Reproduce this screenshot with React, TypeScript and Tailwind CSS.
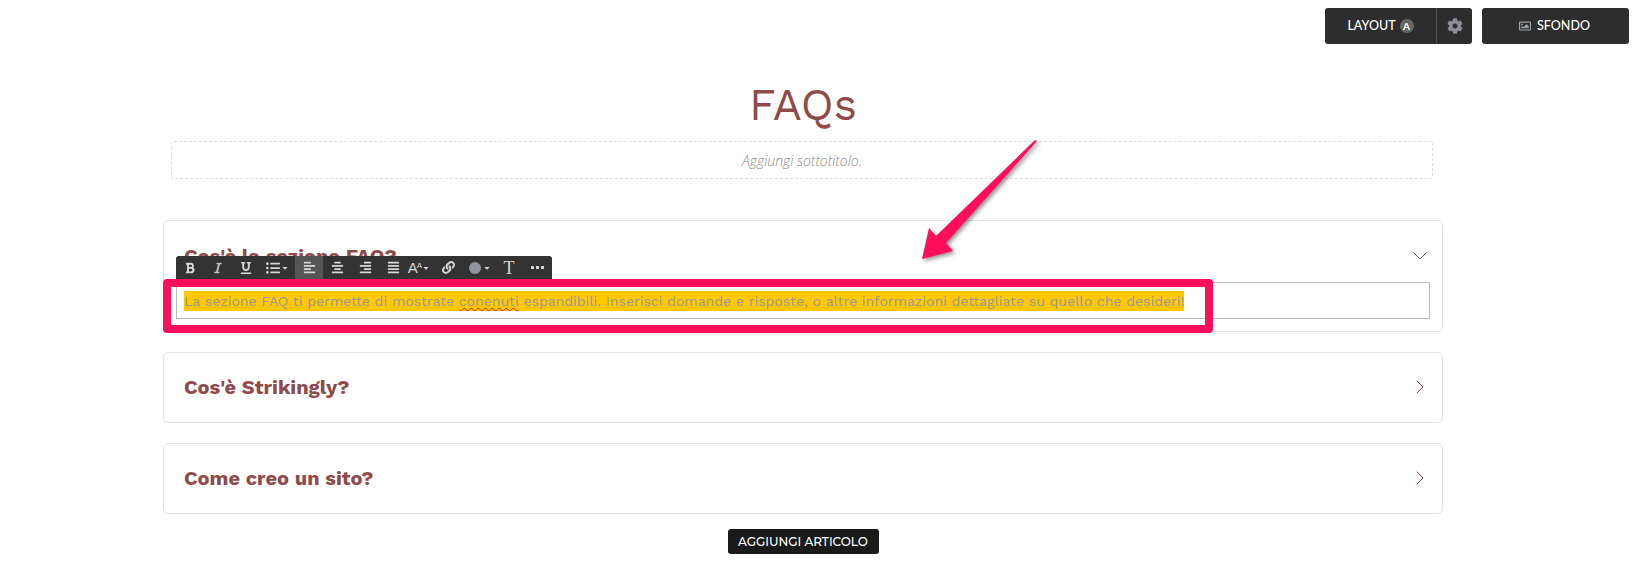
import { ChevronDown, ChevronRight } from 'lucide-react'
import {
  FaAlignCenter,
  FaAlignJustify,
  FaAlignLeft,
  FaAlignRight,
  FaBold,
  FaCaretDown,
  FaCog,
  FaItalic,
  FaLink,
  FaListUl,
  FaRegImage,
  FaUnderline,
} from 'react-icons/fa'

const workSans = "font-['Work_Sans','Inter','Liberation_Sans',sans-serif]"

function Toolbar() {
  const btn = 'flex h-full w-7 items-center justify-center'
  return (
    <div className="absolute left-[12px] top-[35px] z-10 flex h-[23px] w-[376px] rounded-t-[3px] bg-[#333333] text-[#d6d6d6]">
      <div className={btn}><FaBold size={12} /></div>
      <div className={btn}><FaItalic size={12} className="text-[#bbbbbb]" /></div>
      <div className={btn}><FaUnderline size={12} /></div>
      <div className={`${btn} w-[35px] gap-px`}><FaListUl size={14} /><FaCaretDown size={8} /></div>
      <div className={`${btn} bg-[#555555]`}><FaAlignLeft size={13} /></div>
      <div className={btn}><FaAlignCenter size={13} /></div>
      <div className={btn}><FaAlignRight size={13} /></div>
      <div className={btn}><FaAlignJustify size={13} /></div>
      <div className={`${btn} -ml-px items-center pr-[2px]`}>
        <span className="font-['Liberation_Sans',sans-serif] text-[15px] leading-none">A</span>
        <span className="-ml-px mb-1 font-['Liberation_Sans',sans-serif] text-[8px] leading-none">A</span>
        <FaCaretDown size={8} />
      </div>
      <div className={btn}><FaLink size={13} /></div>
      <div className={`${btn} w-[33px] gap-0.5 pl-[3px]`}>
        <span className="h-3 w-3 rounded-full bg-[#8e939c]" />
        <FaCaretDown size={8} />
      </div>
      <div className={`${btn} font-['Liberation_Serif',serif] text-[18px] leading-none`}>T</div>
      <div className={`${btn} gap-[2px]`}>
        <span className="h-[3px] w-[3px] bg-[#d6d6d6]" />
        <span className="h-[3px] w-[3px] bg-[#d6d6d6]" />
        <span className="h-[3px] w-[3px] bg-[#d6d6d6]" />
      </div>
    </div>
  )
}

function FaqRow({ title }: { title: string }) {
  return (
    <div className="flex h-[71px] items-center justify-between rounded-[5px] border border-[#e4e4e4] pb-[2px] pl-[20px] pr-[10px]">
      <h3 className={`${workSans} text-[20px] font-bold text-[#8f4b4b]`}>{title}</h3>
      <ChevronRight size={24} strokeWidth={1} className="text-[#8f4b4b]" />
    </div>
  )
}

export default function App() {
  return (
    <div className="relative h-[571px] overflow-hidden bg-white">
      {/* barra in alto */}
      <div className="flex justify-end gap-[10px] pr-[4px] pt-[8px]">
        <div className="flex h-[36px] w-[147px] items-center rounded-[3px] bg-[#2d2d2d] font-['Lato',sans-serif] text-[12.5px] font-medium text-white">
          <div className="flex flex-1 items-center justify-center gap-1">
            LAYOUT
            <span className="flex h-[14px] w-[14px] items-center justify-center rounded-full bg-[#666666] text-[10px] font-bold">A</span>
          </div>
          <div className="flex h-full w-[36px] items-center justify-center border-l border-[#4a4d55]">
            <FaCog size={16} className="text-[#8b8f98]" />
          </div>
        </div>
        <div className="flex h-[36px] w-[147px] items-center justify-center gap-[6px] rounded-[3px] bg-[#2d2d2d] pr-[2px] font-['Lato',sans-serif] text-[12.5px] font-medium text-white">
          <FaRegImage size={12} className="text-[#9aa0a8]" />
          SFONDO
        </div>
      </div>

      <div className="ml-[163px] w-[1280px]">
        <h1 className={`${workSans} mt-[26px] text-center text-[44px] font-normal leading-[71px] text-[#8f4b4b]`}>FAQs</h1>

        <div className="ml-[8px] flex h-[38px] w-[1262px] items-center justify-center rounded-[3px] border border-dashed border-[#dddddd] font-['Open_Sans',sans-serif] text-[14px] font-light italic text-[#888888]">
          Aggiungi sottotitolo.
        </div>

        <div className="mt-[41px] flex flex-col gap-[20px]">
          {/* primo articolo aperto */}
          <div className="relative h-[112px] rounded-[5px] border border-[#e4e4e4]">
            <div className="flex items-center justify-between pl-[20px] pr-[10px] pt-[20px]">
              <h3 className={`${workSans} text-[20px] font-bold text-[#8f4b4b]`}>Cos'è la sezione FAQ?</h3>
              <ChevronDown size={24} strokeWidth={1} className="text-[#8f4b4b]" />
            </div>
            <Toolbar />
            <div className="absolute left-[12px] top-[61px] h-[37px] w-[1254px] border border-[#bbbbbb] pl-[7px] pt-[5px]">
              <span className={`${workSans} whitespace-nowrap bg-[#ffc800] py-[2px] text-[14px] leading-[20px] text-[#999999]`}>
                La sezione FAQ ti permette di mostrate{' '}
                <span className="underline decoration-[#e02020] decoration-wavy decoration-1">conenuti</span>
                {' '}espandibili. Inserisci domande e risposte, o altre informazioni dettagliate su quello che desideri!
              </span>
            </div>
          </div>
          <FaqRow title="Cos'è Strikingly?" />
          <FaqRow title="Come creo un sito?" />
        </div>

        <div className="mt-[15px] flex justify-center">
          <button className="h-[25px] w-[151px] rounded-[3px] bg-[#1a1a1a] font-['Montserrat','Lato',sans-serif] text-[12px] font-medium text-white">
            AGGIUNGI ARTICOLO
          </button>
        </div>
      </div>

      {/* annotazione */}
      <div className="pointer-events-none absolute left-[163px] top-[279px] z-20 h-[54px] w-[1050px] rounded-[4px] border-[8px] border-[#ff0f5b]" />
      <svg className="pointer-events-none absolute left-[900px] top-[130px] z-20 h-[140px] w-[150px] drop-shadow-[2px_2px_2px_rgba(0,0,0,0.45)]" viewBox="0 0 150 140">
        <polygon points="22,129 29,98 36,106 135,10 137,11 46,113 53,121" fill="#ff0f5b" />
      </svg>
    </div>
  )
}
